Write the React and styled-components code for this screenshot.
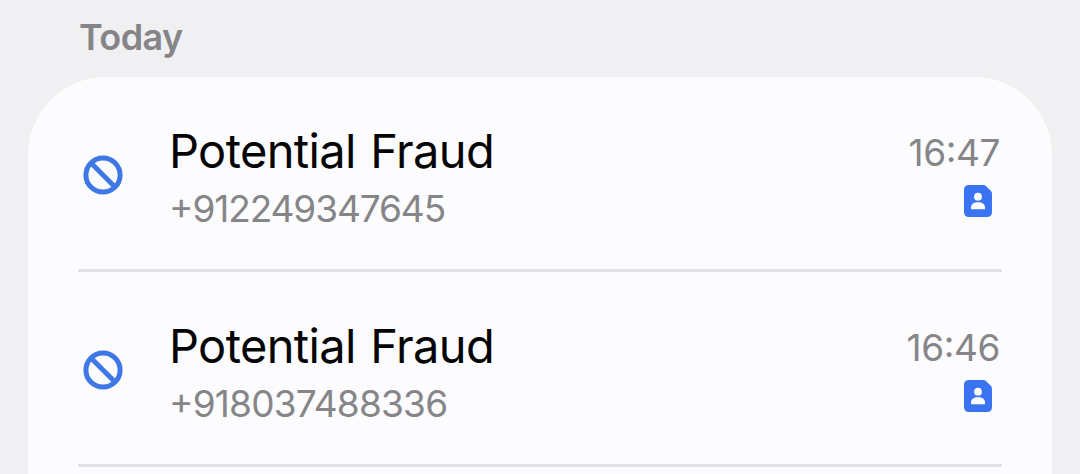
import styled, { createGlobalStyle } from "styled-components";

const calls = [
  {
    id: 1,
    name: "Potential Fraud",
    number: "+912249347645",
    time: "16:47",
    tracking: "-1.1px",
  },
  {
    id: 2,
    name: "Potential Fraud",
    number: "+918037488336",
    time: "16:46",
    tracking: "-0.8px",
  },
];

const App = () => {
  return (
    <>
      <GlobalStyle />
      <Screen>
        <DayLabel>Today</DayLabel>
        <Card>
          {calls.map((call) => (
            <CallRow key={call.id}>
              <BlockedIcon viewBox="0 0 40 40" aria-label="Blocked">
                <circle cx="20" cy="20" r="17.1" />
                <path d="M8 8L32 32" />
              </BlockedIcon>
              <Caller>
                <Name>{call.name}</Name>
                <Number $tracking={call.tracking}>{call.number}</Number>
              </Caller>
              <Meta>
                <Time>{call.time}</Time>
                <ContactIcon viewBox="0 0 28 32" aria-label="Contact">
                  <path
                    fill="#3a74f2"
                    d="M5 0H19.5Q21 0 22 1L27 6Q28 7 28 8.5V27Q28 32 23 32H5Q0 32 0 27V5Q0 0 5 0Z"
                  />
                  <circle cx="14" cy="11.7" r="3.9" fill="#fcfcfe" />
                  <path
                    fill="#fcfcfe"
                    d="M7 24.3V22.5C7 19 10 17.3 14 17.3S21 19 21 22.5V24.3Z"
                  />
                </ContactIcon>
              </Meta>
            </CallRow>
          ))}
        </Card>
      </Screen>
    </>
  );
};

const GlobalStyle = createGlobalStyle`
  * {
    box-sizing: border-box;
  }
  body {
    margin: 0;
    background: #f0f0f2;
    font-family: Inter, "Liberation Sans", sans-serif;
  }
`;

const Screen = styled.main`
  display: flex;
  flex-direction: column;
  height: 474px;
  padding: 0 28px;
  overflow: hidden;
`;

const DayLabel = styled.h2`
  flex: none;
  height: 77px;
  margin: 0;
  padding: 15px 0 0 51px;
  color: #858587;
  font-size: 36px;
  font-weight: 600;
  line-height: 44px;
  letter-spacing: -0.6px;
`;

const Card = styled.section`
  flex: none;
  height: 420px;
  padding: 0 50px;
  border-radius: 78px 78px 0 0;
  background: #fcfcfe;
`;

const CallRow = styled.article`
  display: flex;
  height: 195px;
  border-bottom: 3px solid #e2e2e4;
`;

const BlockedIcon = styled.svg`
  flex: none;
  width: 40px;
  height: 40px;
  margin: 78px 0 0 5px;
  fill: none;
  stroke: #3f78e6;
  stroke-width: 5;
`;

const Caller = styled.div`
  flex: 1;
  padding: 46px 0 0 46px;
`;

const Name = styled.div`
  color: #050505;
  font-size: 47px;
  line-height: 56px;
  letter-spacing: -0.65px;
  word-spacing: 2px;
  white-space: nowrap;
`;

const Number = styled.div`
  margin-top: 8px;
  color: #868688;
  font-size: 37px;
  line-height: 44px;
  letter-spacing: ${(props) => props.$tracking};
  font-feature-settings: "case";
`;

const Meta = styled.div`
  display: flex;
  flex-direction: column;
  align-items: flex-end;
  padding-top: 54px;
`;

const Time = styled.time`
  padding-right: 2px;
  color: #868688;
  font-size: 37px;
  line-height: 44px;
  letter-spacing: -0.4px;
  font-feature-settings: "case";
`;

const ContactIcon = styled.svg`
  width: 28px;
  height: 32px;
  margin: 10px 10px 0 0;
`;

export default App;
